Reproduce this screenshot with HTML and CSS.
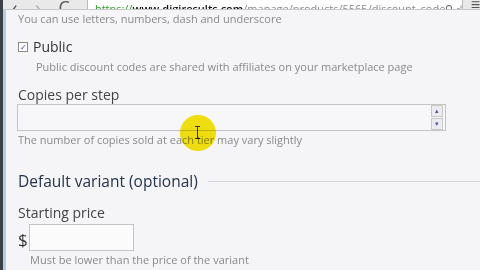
FILE: index.html
```html
<!DOCTYPE html>
<html lang="en">
<head>
    <meta charset="UTF-8">
    <title>Discount code</title>
    <link rel="stylesheet" href="styles.css">
</head>
<body>

<div class="window">
    <div class="chrome">
        <span class="nav">&#8249;</span>
        <span class="nav dim">&#8250;</span>
        <span class="nav">C</span>
        <div class="url">
            <span class="lock"></span>
            <span class="proto">https://</span><span class="host">www.digiresults.com</span><span class="path">/manage/products/5565/discount_code</span>
            <span class="tail">&#9906; &#9734;</span>
        </div>
        <span class="menu">&#8801;</span>
    </div>

    <div class="page">
        <p class="hint top">You can use letters, numbers, dash and underscore</p>

        <label class="check">
            <span class="box">&#10003;</span>
            Public
        </label>
        <p class="hint indent">Public discount codes are shared with affiliates on your marketplace page</p>

        <div class="field">
            <div class="label">Copies per step</div>
            <div class="input wide">
                <div class="spin">
                    <span>&#9652;</span>
                    <span>&#9662;</span>
                </div>
            </div>
            <p class="hint">The number of copies sold at each tier may vary slightly</p>
        </div>

        <h2 class="legend"><span>Default variant (optional)</span></h2>

        <div class="field">
            <div class="label">Starting price</div>
            <div class="price">
                <span class="dollar">$</span>
                <div class="input small"></div>
            </div>
            <p class="hint indent2">Must be lower than the price of the variant</p>
        </div>

        <div class="cursor">
            <span class="ibeam"></span>
        </div>
    </div>
</div>

</body>
</html>
```

FILE: styles.css
```css
body {
    margin: 0;
    padding: 0;
    background-color: #f5f4f7;
    font-family: "Open Sans", sans-serif;
    overflow: hidden;
}

.window {
    height: 270px;
    border-left: 3px solid #3c4048;
    box-shadow: inset 3px 0 0 #b9cbe0;
}

.chrome {
    height: 9px;
    background-color: #e9e9e9;
    border-bottom: 1px solid #c8c8c8;
    display: flex;
    align-items: flex-end;
    overflow: hidden;
    padding-left: 9px;
}

.nav {
    font-size: 18px;
    line-height: 16px;
    color: #555;
    width: 24px;
    margin-bottom: -6px;
}

.nav.dim {
    color: #aaa;
}

.url {
    margin-left: 5px;
    width: 385px;
    height: 18px;
    margin-bottom: -9px;
    background-color: #fff;
    border: 1px solid #bbb;
    border-radius: 2px;
    font-size: 11px;
    line-height: 15px;
    display: flex;
    align-items: center;
    white-space: nowrap;
    overflow: hidden;
}

.lock {
    width: 9px;
    height: 10px;
    background-color: #4caf3a;
    margin: 0 4px 0 3px;
}

.proto {
    color: #2d9a2d;
}

.host {
    color: #111;
    font-weight: 600;
}

.path {
    color: #888;
}

.tail {
    margin-left: auto;
    padding-right: 4px;
    color: #666;
}

.menu {
    margin-left: 8px;
    font-size: 16px;
    color: #555;
    margin-bottom: -6px;
}

.page {
    position: relative;
    padding-left: 15px;
}

.hint {
    margin: 0;
    font-size: 11px;
    line-height: 14px;
    color: #8a8a8a;
}

.hint.top {
    padding-top: 2px;
}

.hint.indent {
    padding-left: 18px;
    margin-top: 4px;
}

.hint.indent2 {
    padding-left: 12px;
    margin-top: 2px;
}

.check {
    display: flex;
    align-items: center;
    gap: 5px;
    margin-top: 12px;
    font-size: 14px;
    line-height: 18px;
    color: #333;
}

.box {
    width: 8px;
    height: 8px;
    border: 1px solid #888;
    background-color: #fff;
    color: #2b45a8;
    font-size: 8px;
    line-height: 8px;
    text-align: center;
}

.field {
    margin-top: 12px;
}

.label {
    font-size: 14px;
    line-height: 18px;
    color: #444;
}

.input {
    background-color: #f7f7f9;
    border: 1px solid #c4c4c4;
    box-sizing: border-box;
    height: 27px;
}

.input.wide {
    width: 429px;
    display: flex;
    justify-content: flex-end;
    align-items: center;
    margin-left: -1px;
    margin-bottom: 2px;
}

.spin {
    display: flex;
    flex-direction: column;
    gap: 1px;
    margin-right: 2px;
}

.spin span {
    width: 10px;
    height: 10px;
    border: 1px solid #c8c8c8;
    background-color: #ececf0;
    font-size: 7px;
    line-height: 10px;
    text-align: center;
    color: #4a5aa0;
}

.legend {
    display: flex;
    align-items: center;
    margin: 23px 0 0 0;
    font-weight: normal;
    font-size: 15.5px;
    line-height: 22px;
    color: #24344e;
}

.legend::after {
    content: "";
    flex: 1;
    margin-left: 10px;
    border-top: 1px solid #d6d6d8;
}

.price {
    display: flex;
    align-items: flex-end;
    gap: 1px;
    margin-top: 2px;
}

.dollar {
    font-size: 17px;
    line-height: 22px;
    color: #333;
}

.input.small {
    width: 105px;
    background-color: #fbfbfc;
}

.cursor {
    position: absolute;
    left: 177px;
    top: 105px;
    width: 36px;
    height: 36px;
    border-radius: 50%;
    background-color: #f6e610;
    mix-blend-mode: multiply;
}

.ibeam {
    position: absolute;
    left: 17px;
    top: 11px;
    width: 1px;
    height: 13px;
    background-color: #333;
}

.ibeam::before,
.ibeam::after {
    content: "";
    position: absolute;
    left: -2px;
    width: 5px;
    height: 1px;
    background-color: #333;
}

.ibeam::before {
    top: 0;
}

.ibeam::after {
    bottom: 0;
}
```
